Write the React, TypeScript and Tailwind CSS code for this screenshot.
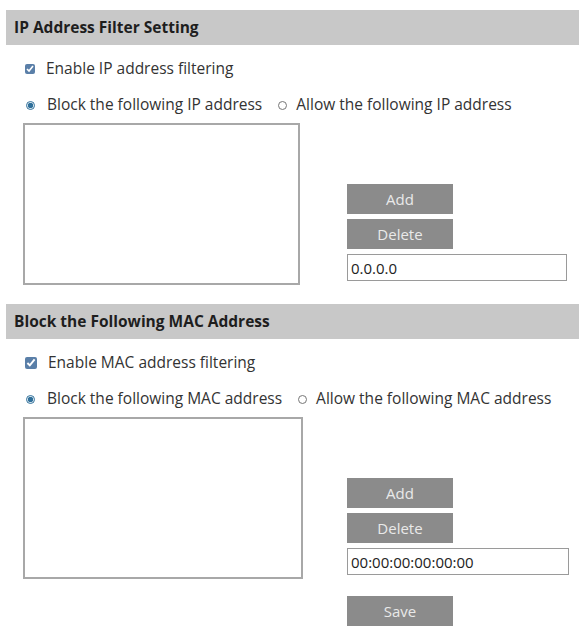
import { useState } from 'react';

type FilterSectionProps = {
  title: string;
  kind: string;
  placeholder: string;
  boxWidth: string;
  sideGap: string;
  inputWidth: string;
  largeCheck?: boolean;
};

function GrayButton({ label }: { label: string }) {
  return (
    <button
      type="button"
      className="w-[106px] h-[30px] bg-[#8b8b8b] text-[#e9e9e9] text-[15px] leading-none"
    >
      {label}
    </button>
  );
}

function FilterSection({ title, kind, placeholder, boxWidth, sideGap, inputWidth, largeCheck }: FilterSectionProps) {
  const [enabled, setEnabled] = useState(true);
  const [mode, setMode] = useState<'block' | 'allow'>('block');
  const [value, setValue] = useState(placeholder);

  return (
    <section>
      {/* Section title bar */}
      <div className="ml-[6px] h-[35px] bg-[#c8c8c8] flex items-center pl-[8px]">
        <h2 className="text-[15.5px] font-bold text-[#1e1e1e]">{title}</h2>
      </div>

      {/* Enable checkbox */}
      <label className="mt-[14px] ml-[25px] flex items-center gap-[11px] h-[20px]">
        <input
          type="checkbox"
          checked={enabled}
          onChange={(e) => setEnabled(e.target.checked)}
          className={largeCheck ? 'w-[12px] h-[12px] accent-[#5a7fa8]' : 'w-[10px] h-[10px] accent-[#5a7fa8]'}
        />
        <span className="text-[15.5px] text-[#333]">Enable {kind} address filtering</span>
      </label>

      {/* Block / allow choice */}
      <div className="mt-[16px] ml-[26px] flex items-center h-[20px] text-[15.5px] text-[#333]">
        <label className="flex items-center gap-[12px]">
          <input
            type="radio"
            checked={mode === 'block'}
            onChange={() => setMode('block')}
            className="w-[9px] h-[9px] accent-[#2f6f9a]"
          />
          <span>Block the following {kind} address</span>
        </label>
        <label className="flex items-center gap-[9px] ml-[16px]">
          <input
            type="radio"
            checked={mode === 'allow'}
            onChange={() => setMode('allow')}
            className="w-[9px] h-[9px] accent-[#2f6f9a]"
          />
          <span>Allow the following {kind} address</span>
        </label>
      </div>

      {/* Address list and controls */}
      <div className="mt-[8px] ml-[23px] flex items-end">
        <div className={`${boxWidth} h-[162px] border-2 border-[#a8a8a8] bg-white`} />
        <div className={`${sideGap} mb-[4px] flex flex-col gap-[5px]`}>
          <GrayButton label="Add" />
          <GrayButton label="Delete" />
          <input
            value={value}
            onChange={(e) => setValue(e.target.value)}
            className={`${inputWidth} h-[27px] border border-[#9a9a9a] px-[3px] text-[15px] text-[#222] outline-none`}
          />
        </div>
      </div>
    </section>
  );
}

export default function App() {
  return (
    <div className="w-[579px] h-[629px] bg-white pt-[10px] font-['Open_Sans',sans-serif]">
      <FilterSection
        title="IP Address Filter Setting"
        kind="IP"
        placeholder="0.0.0.0"
        boxWidth="w-[277px]"
        sideGap="ml-[47px]"
        inputWidth="w-[220px]"
      />
      <div className="mt-[19px]">
        <FilterSection
          title="Block the Following MAC Address"
          kind="MAC"
          placeholder="00:00:00:00:00:00"
          boxWidth="w-[280px]"
          sideGap="ml-[44px]"
          inputWidth="w-[222px]"
          largeCheck
        />
      </div>
      <div className="mt-[17px] ml-[347px]">
        <GrayButton label="Save" />
      </div>
    </div>
  );
}
